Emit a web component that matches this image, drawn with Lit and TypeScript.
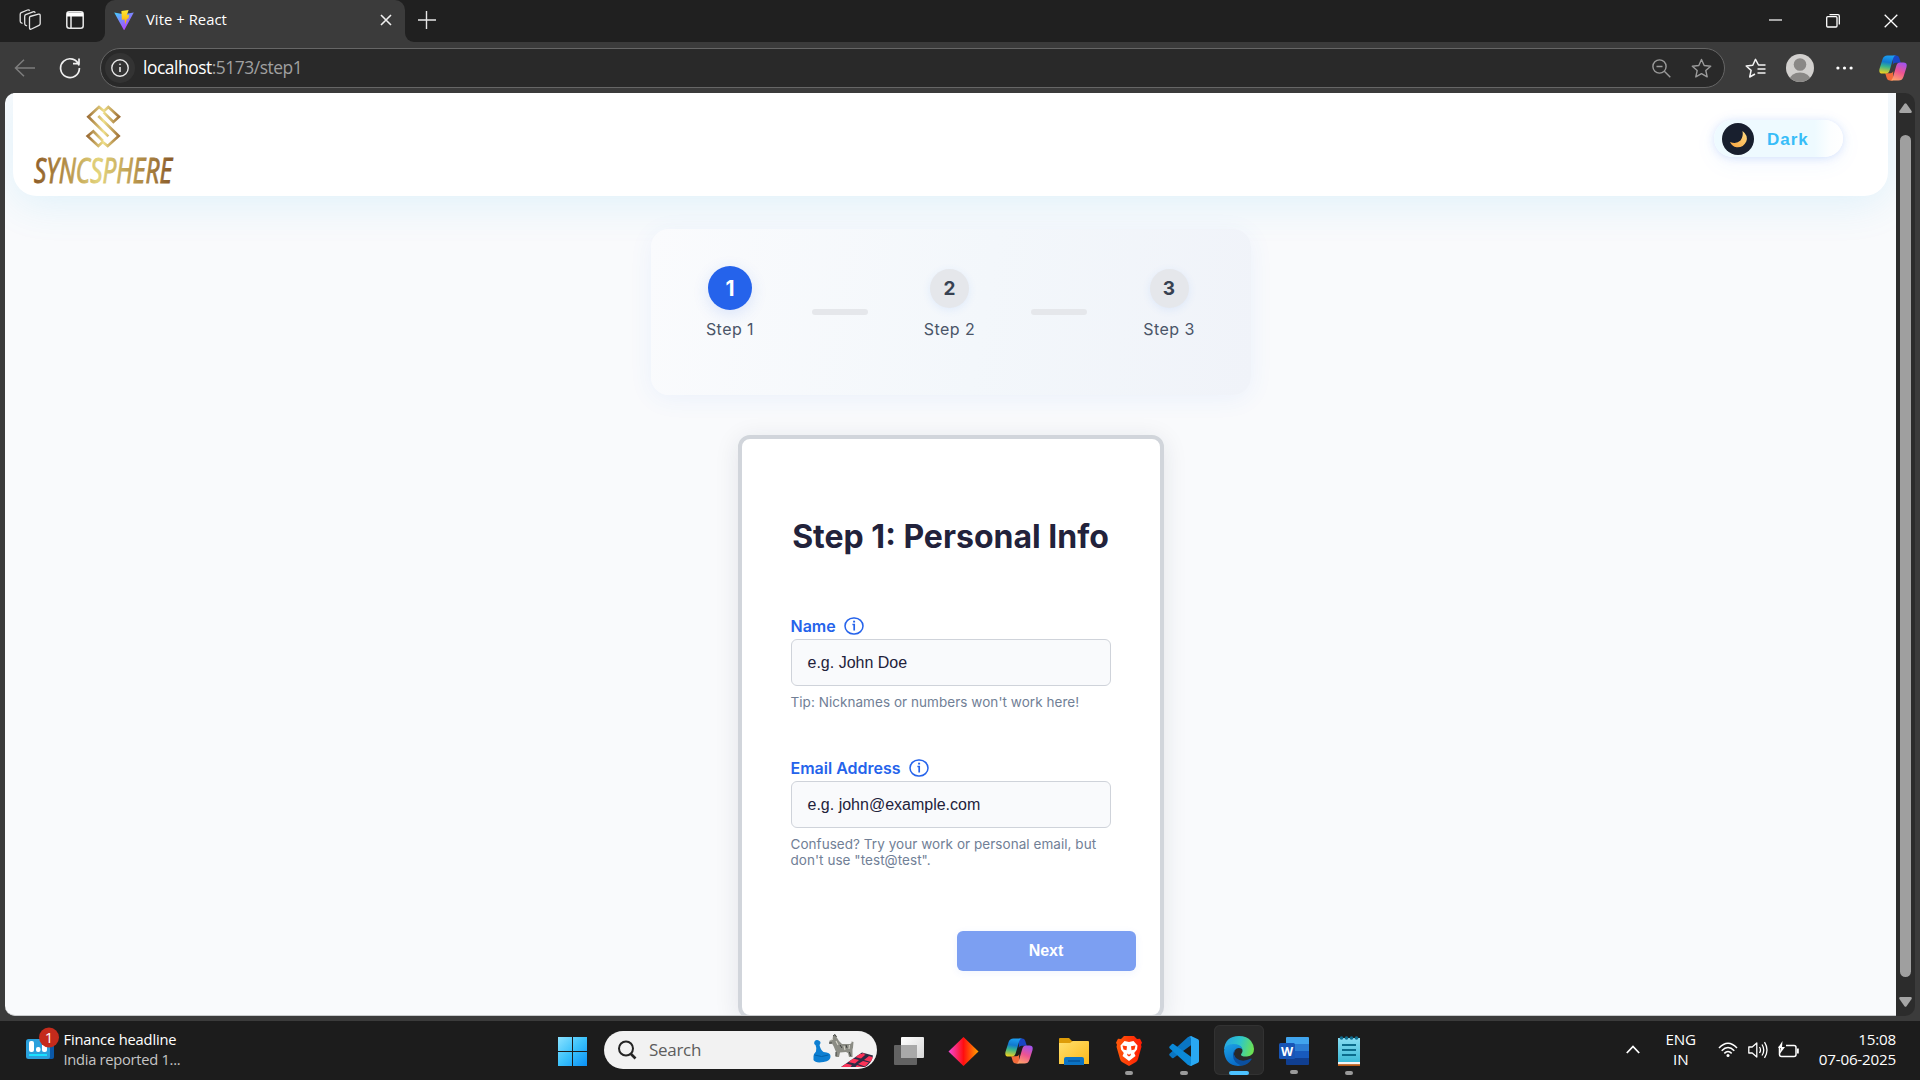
import { LitElement, html, css, svg } from "lit";
import { customElement, property } from "lit/decorators.js";

const copilot = (id: string) => svg`
  <svg width="28" height="26" viewBox="0 0 28 26">
    <defs>
      <linearGradient id="${id}a" x1="0.4" y1="0" x2="0.25" y2="1"><stop offset="0" stop-color="#1b9df0"/><stop offset=".35" stop-color="#1279cf"/><stop offset=".6" stop-color="#37b48d"/><stop offset="1" stop-color="#f5d21b"/></linearGradient>
      <linearGradient id="${id}b" x1="0.7" y1="0" x2="0.3" y2="1"><stop offset="0" stop-color="#a353ec"/><stop offset=".5" stop-color="#ee5490"/><stop offset="1" stop-color="#ffa26b"/></linearGradient>
    </defs>
    <path fill="#1a46c4" d="M14 .5h3.2q2.3 0 3 2.2l1.6 5h-5q-2.3 0-3 2z"/>
    <path fill="#f26b3a" d="M14 25.500h-3.200q-2.300 0-3-2.200l-1.600-5h5q2.300 0 3-2z"/>
    <path fill="url(#${id}a)" d="M8.500.500h8.500q-2 .3-2.700 2.600l-3.700 12.500q-.9 2.900-3.600 2.900H3.500Q-.7 18.500.6 13.600L3.600 4Q4.700.5 8.500.5z"/>
    <path fill="url(#${id}b)" d="M19.500 25.500H11q2-.3 2.700-2.600l3.700-12.500q.9-2.900 3.600-2.900h3.500q4.200 0 2.900 4.900L24.400 22q-1.100 3.500-4.900 3.500z"/>
  </svg>`;

const star = "M10.500 1.500l2.700 6 6.500.7-4.900 4.300 1.400 6.400-5.700-3.300-5.700 3.300 1.400-6.400-4.900-4.300 6.500-.7z";

@customElement("edge-chrome")
class EdgeChrome extends LitElement {
  static styles = css`
    :host { display: block; font-family: "Open Sans", "Noto Sans", sans-serif; color: #fff; }
    svg { display: block; flex: none; }
    .strip { height: 42px; background: #202020; display: flex; align-items: stretch; }
    .left { width: 105px; display: flex; align-items: center; gap: 24px; padding: 0 0 2px 19px; box-sizing: border-box; border-bottom-right-radius: 9px; background: #202020; }
    .under { background: #3b3b3b; display: flex; }
    .grow { flex: 1; }
    .tab { width: 300px; box-sizing: border-box; background: #3b3b3b; border-radius: 10px 10px 0 0; display: flex; align-items: center; padding: 0 13px 2px 9px; }
    .corner { background: #202020; display: flex; }
    .title { font-size: 14.8px; letter-spacing: 0.05px; margin: 0 0 2px 12px; flex: 1; white-space: nowrap; }
    .rest { flex: 1; background: #202020; border-bottom-left-radius: 9px; display: flex; align-items: center; padding: 0 22px 2px 12px; }
    .win { margin: 2px 0 0 auto; display: flex; gap: 44px; align-items: center; }
    .bar { height: 51px; box-sizing: border-box; background: #3b3b3b; display: flex; align-items: center; padding: 6px 13px 5px 14px; }
    .back { margin-right: 24px; }
    .addr { margin-left: 19px; width: 1625px; height: 40px; box-sizing: border-box; border: 1.5px solid #666; border-radius: 20px; background: #292929; display: flex; align-items: center; padding: 0 12px 0 4px; }
    .info { width: 30px; height: 30px; border-radius: 50%; background: #333; display: flex; align-items: center; justify-content: center; }
    .url { margin: 0 0 2px 8px; font-size: 17.4px; letter-spacing: -0.46px; flex: 1; color: #a0a0a0; white-space: nowrap; }
    .url b { font-weight: 400; color: #fff; }
    .tools { display: flex; align-items: center; gap: 20px; }
    .right { display: flex; align-items: center; margin-left: 20px; }
    .avatar { margin: 0 22px 0 20px; }
    .dots { margin-right: 26px; }
  `;
  render() {
    return html`
      <div class="strip">
        <div class="under"><div class="left">
          <svg width="23" height="22" viewBox="0 0 23 22" fill="none" stroke="#e2e2e2" stroke-width="1.300" stroke-linejoin="round"><path d="M11 7.500l8.500-2.300q1.700-.3 1.700 1.300v8q0 1.200-1.200 1.800l-7.500 3.700q-2 .8-2-1.200V9q0-1.200.5-1.500z"/><path d="M8 17l-1.300-.7q-1-.4-1-1.700V7.400q0-1.300 1-1.700L14 2.800q1.500-.5 2.300 1"/><path d="M3.500 14.500l-1.300-.7q-1-.4-1-1.700V5.400q0-1.300 1-1.700L8.500 1q1.500-.5 2.300.600"/></svg>
          <svg width="18" height="18" viewBox="0 0 18 18" fill="none" stroke="#e8e8e8" stroke-width="1.500"><rect x=".8" y=".8" width="16.400" height="16.400" rx="2.500"/><path d="M5 5v12"/><path d="M1 1.500h16v4H1z" fill="#fff" stroke="none"/></svg>
        </div></div>
        <div class="corner"><div class="tab">
          <svg width="20" height="20" viewBox="0 0 20 20"><defs><linearGradient id="v1" x1="0" y1="0" x2=".7" y2="1"><stop stop-color="#41d1ff"/><stop offset="1" stop-color="#bd34fe"/></linearGradient><linearGradient id="v2" x1="0" y1="0" x2="0" y2="1"><stop stop-color="#ffea35"/><stop offset="1" stop-color="#ffa800"/></linearGradient></defs><path fill="url(#v1)" d="M.2 2.500l9.500 1.700 10.100-1.700L10.500 19.800q-.4.500-.8 0z"/><path fill="url(#v2)" d="M7.400 1l7.200-1-1.800 5.200 2.200-.4-.4 3.500-1.700.6-1.800 5.500-.5-5-2.700.4z"/></svg>
          <span class="title">Vite + React</span>
          <svg width="12" height="12" viewBox="0 0 12 12" stroke="#f0f0f0" stroke-width="1.600"><path d="M1 1l10 10M11 1L1 11"/></svg>
        </div></div>
        <div class="under grow"><div class="rest">
          <svg width="19" height="18" viewBox="0 0 19 18" stroke="#e6e6e6" stroke-width="1.400"><path d="M9.500 0v18M1 9h18"/></svg>
          <div class="win">
            <svg width="13" height="14" viewBox="0 0 13 14" stroke="#fff" stroke-width="1.200"><path d="M0 6h13"/></svg>
            <svg width="14" height="14" viewBox="0 0 14 14" fill="none" stroke="#fff" stroke-width="1.300"><rect x=".7" y="2.700" width="10.300" height="10.300" rx="1"/><path d="M3.500.7H12q1.300 0 1.300 1.300v8.500"/></svg>
            <svg width="14" height="14" viewBox="0 0 14 14" stroke="#fff" stroke-width="1.300"><path d="M.7.700l12.600 12.600M13.300.700L.7 13.300"/></svg>
          </div>
        </div></div>
      </div>
      <div class="bar">
        <svg class="back" width="21" height="18" viewBox="0 0 21 18" fill="none" stroke="#7d7d7d" stroke-width="1.500"><path d="M21 9H2M10 .8L1.500 9l8.500 8.200"/></svg>
        <svg width="22" height="22" viewBox="0 0 22 22" fill="none" stroke="#f0f0f0" stroke-width="1.700"><path d="M20 8.500A9.400 9.400 0 1 0 20.400 11M20 1.500v5.200h-6"/></svg>
        <div class="addr">
          <div class="info"><svg width="18" height="18" viewBox="0 0 18 18" fill="none" stroke="#e8e8e8" stroke-width="1.400"><circle cx="9" cy="9" r="8.200"/><path d="M9 8v5" stroke-width="1.600"/><circle cx="9" cy="5.300" r=".6" fill="#e8e8e8" stroke-width=".6"/></svg></div>
          <span class="url"><b>localhost</b>:5173/step1</span>
          <div class="tools">
            <svg width="19" height="19" viewBox="0 0 19 19" fill="none" stroke="#9a9a9a" stroke-width="1.400"><circle cx="7.500" cy="7.500" r="6.600"/><path d="M4.500 7.500h6M12.300 12.300l6 6"/></svg>
            <svg width="21" height="21" viewBox="0 0 21 21" fill="none" stroke="#9a9a9a" stroke-width="1.400" stroke-linejoin="round"><path d="${star}"/></svg>
          </div>
        </div>
        <div class="right">
          <svg width="21" height="21" viewBox="0 0 21 21" fill="none" stroke="#f4f4f4" stroke-width="1.500" stroke-linejoin="round"><path d="M20.500 7h-7L10.500 1.300 7.800 7.300 1.200 8l4.900 4.400-1.400 6.600 5.300-3M12.500 11h8M12.500 15h8"/></svg>
          <svg class="avatar" width="28" height="28" viewBox="0 0 28 28"><defs><clipPath id="av"><circle cx="14" cy="14" r="14"/></clipPath></defs><g clip-path="url(#av)"><rect width="28" height="28" fill="#d2d0ce"/><circle cx="14" cy="10.500" r="6.300" fill="#8a8886"/><ellipse cx="14" cy="26" rx="10.500" ry="7.500" fill="#8a8886"/></g></svg>
          <svg class="dots" width="17" height="4" viewBox="0 0 17 4" fill="#fff"><circle cx="1.900" cy="2" r="1.600"/><circle cx="8.500" cy="2" r="1.600"/><circle cx="15.100" cy="2" r="1.600"/></svg>
          ${copilot("c")}
        </div>
      </div>`;
  }
}

@customElement("form-field")
class FormField extends LitElement {
  @property() label = "";
  @property() sample = "";
  @property() hint = "";
  static styles = css`
    :host { display: block; font-family: Inter, sans-serif; }
    .label { display: flex; align-items: center; height: 26px; font-size: 16px; font-weight: 600; color: #2563eb; letter-spacing: 0; gap: 9px; }
    .label svg { display: block; margin: 0 0 1px -.5px; }
    .box { height: 47px; box-sizing: border-box; border: 1px solid #cfd3da; border-radius: 6px; background: #f9fafc; color: #22223b; font: 16px "Liberation Sans", sans-serif; display: flex; align-items: center; padding: 0 16px; }
    .hint { margin-top: 8px; font-size: 13.500px; line-height: 16px; color: #718096; letter-spacing: 0.050px; white-space: pre-line; }
  `;
  render() {
    return html`
      <div class="label"><span>${this.label}</span>
        <svg width="20" height="18" viewBox="0 0 20 18" fill="none" stroke="#2563eb" stroke-width="1.500"><rect x="1" y="1" width="18" height="16" rx="8.500" ry="8"/><path d="M8.400 7.500h1.800V13.500" stroke-width="1.700"/><path d="M9.100 4.600h2" stroke-width="1.800"/></svg>
      </div>
      <div class="box">${this.sample}</div>
      <div class="hint">${this.hint}</div>`;
  }
}

@customElement("page-view")
class PageView extends LitElement {
  static styles = css`
    :host { display: block; font-family: Inter, sans-serif; }
    .view { height: 923px; box-sizing: border-box; background: #f9fafc; border-radius: 10px 0 0 10px; overflow: hidden; border-bottom: 1px solid #c9cbcd; display: flex; flex-direction: column; align-items: center; }
    .head { flex: none; align-self: stretch; margin: 0 8px; height: 103px; box-sizing: border-box; background: #fff; border-radius: 0 0 24px 24px; box-shadow: 0 8px 40px rgba(56, 185, 240, .13); display: flex; justify-content: space-between; align-items: flex-start; padding: 8px 45px 0 18px; }
    .head svg { display: block; overflow: visible; }
    .brand { font: italic 500 35px "Open Sans", sans-serif; }
    .toggle { margin-top: 19px; width: 129px; height: 37px; box-sizing: border-box; border-radius: 19px; background: linear-gradient(90deg, #eefaff 0 78%, #fcfeff 90%, #fff); box-shadow: 0 1px 9px rgba(37, 99, 235, .17), 0 6px 24px rgba(56, 130, 248, .06); display: flex; align-items: center; padding-left: 8px; }
    .moon { width: 32px; height: 32px; border-radius: 50%; background: #181f2e; display: flex; align-items: center; justify-content: center; }
    .mode { margin: 2px 0 0 13px; font: bold 17px "Liberation Sans", sans-serif; letter-spacing: 1px; color: #38bdf8; }
    .steps { flex: none; margin-top: 33px; width: 600px; height: 166px; box-sizing: border-box; border-radius: 18px; background: linear-gradient(100deg, #fafbfd, #f3f7fb 55%, #f0f3f9); box-shadow: 0 4px 24px rgba(59, 130, 246, .07); display: flex; padding: 34px 56px 0 54px; align-items: flex-start; justify-content: space-between; }
    .step { width: 51px; display: flex; flex-direction: column; align-items: center; font-size: 16px; line-height: 20px; letter-spacing: .45px; color: #4a5568; white-space: nowrap; }
    .ring { height: 50px; display: flex; align-items: center; margin-bottom: 6px; }
    .num { width: 39px; height: 39px; box-sizing: border-box; padding-top: 1px; border-radius: 50%; background: #e5e7eb; color: #374151; font-weight: 700; font-size: 19px; letter-spacing: 0; display: flex; align-items: center; justify-content: center; box-shadow: 0 2px 8px rgba(59, 130, 246, .1); }
    .active { width: 44px; height: 44px; background: #2563eb; color: #fff; font-size: 21px; box-shadow: 0 4px 16px rgba(37, 99, 235, .15); }
    .link { margin-top: 46px; width: 56px; height: 6px; border-radius: 3px; background: #e5e7eb; }
    .card { flex: none; margin-top: 40px; width: 426px; height: 584px; box-sizing: border-box; border: 4px solid #d1d5db; border-radius: 12px; background: #fff; box-shadow: 0 4px 24px rgba(30, 41, 59, .1); display: flex; flex-direction: column; padding: 76px 24px 0 49px; }
    h1 { margin: 0 0 54px; width: 320px; font-size: 32px; line-height: 44px; font-weight: 700; color: #22223b; letter-spacing: 0; text-align: center; white-space: nowrap; }
    .field { width: 320px; height: 142px; }
    .next { align-self: flex-end; margin-top: 34px; width: 179px; height: 40px; border-radius: 6px; background: #7c9ff2; color: #fff; font: bold 16px "Liberation Sans", sans-serif; display: flex; align-items: center; justify-content: center; box-shadow: 0 2px 8px rgba(37, 99, 235, .07); }
  `;
  render() {
    return html`
      <main class="view">
        <header class="head">
          <svg width="150" height="94" viewBox="0 0 150 94">
            <defs>
              <linearGradient id="g" gradientUnits="userSpaceOnUse" x1="2" y1="0" x2="144" y2="0"><stop stop-color="#8d5c27"/><stop offset=".22" stop-color="#b18b44"/><stop offset=".46" stop-color="#e3d47c"/><stop offset=".7" stop-color="#bd9b50"/><stop offset="1" stop-color="#875727"/></linearGradient>
              <linearGradient id="m" gradientUnits="userSpaceOnUse" x1="262" y1="0" x2="360" y2="0"><stop stop-color="#9b6c35"/><stop offset=".5" stop-color="#efdf88"/><stop offset="1" stop-color="#9b6b33"/></linearGradient>
            </defs>
            <g transform="translate(-31 -101) scale(.33333)" fill="none" stroke="url(#m)" stroke-width="8">
              <path d="M311 337L340 366 357 350 325 321 312 333 297 321 265 350 325 409"/>
              <path d="M309 423L280 394 263 408 295 438 308 426 323 438 356 408 295 348"/>
            </g>
            <text class="brand" x="3" y="82" textLength="138" lengthAdjust="spacingAndGlyphs" fill="url(#g)" stroke="url(#g)" stroke-width="1">SYNCSPHERE</text>
          </svg>
          <div class="toggle">
            <span class="moon"><svg width="20" height="20" viewBox="0 0 20 20"><defs><linearGradient id="mo" x1="1" y1="0" x2="0" y2="1"><stop stop-color="#ffdc83"/><stop offset="1" stop-color="#f7a23d"/></linearGradient></defs><path fill="url(#mo)" d="M14.500 2Q20.500 6.500 18.300 12.500 15 19 8.500 18.300 4 17.500 2 13q6.500 2.500 10.500-1.500Q15.500 7.500 14.500 2z"/></svg></span>
            <span class="mode">Dark</span>
          </div>
        </header>
        <section class="steps">
          <div class="step"><span class="ring"><span class="num active">1</span></span>Step 1</div>
          <span class="link"></span>
          <div class="step"><span class="ring"><span class="num">2</span></span>Step 2</div>
          <span class="link"></span>
          <div class="step"><span class="ring"><span class="num">3</span></span>Step 3</div>
        </section>
        <section class="card">
          <h1>Step 1: Personal Info</h1>
          <form-field class="field" label="Name" sample="e.g. John Doe" hint="Tip: Nicknames or numbers won't work here!"></form-field>
          <form-field class="field" label="Email Address" sample="e.g. john@example.com" .hint=${'Confused? Try your work or personal email, but\ndon\'t use "test@test".'}></form-field>
          <div class="next">Next</div>
        </section>
      </main>`;
  }
}

@customElement("task-bar")
class TaskBar extends LitElement {
  static styles = css`
    :host { display: block; font-family: "Open Sans", "Noto Sans", sans-serif; color: #fff; }
    svg { display: block; flex: none; }
    .bar { height: 59px; box-sizing: border-box; background: #1c1c1c; display: flex; align-items: center; padding-bottom: 2px; }
    .news { width: 544.5px; box-sizing: border-box; padding-left: 25px; display: flex; gap: 4.500px; height: 57px; }
    .news svg { margin-top: 5px; }
    .copy { font-size: 14.700px; line-height: 20px; letter-spacing: -.17px; padding-top: 8px; white-space: nowrap; }
    .copy div + div { color: #c5c5c5; letter-spacing: -.28px; }
    .cell { width: 55px; height: 50px; display: flex; align-items: center; justify-content: center; flex-direction: column; box-sizing: border-box; padding-top: 12px; }
    .pill { flex: none; width: 8px; height: 4px; border-radius: 2px; background: #9a9a9a; margin-top: 5px; }
    .none { background: transparent; }
    .tile { width: 50px; margin: 0 2.500px; background: #292929; border-radius: 6px; box-shadow: inset 0 0 0 1px #323232; }
    .on { width: 20px; background: #4cc2ff; }
    .search { margin: 0 4.500px 0 4px; width: 273px; height: 38px; border-radius: 19px; background: #f2f2f2; display: flex; align-items: center; color: #5d5d5d; font-size: 17px; letter-spacing: -.3px; overflow: hidden; padding-left: 13px; box-sizing: border-box; }
    .search span { flex: 1; padding-left: 12.500px; }
    .tray { margin-left: auto; display: flex; align-items: center; padding-right: 24px; font-size: 15.200px; line-height: 20px; letter-spacing: -.2px; }
    .lang { margin: 0 22px 2px 26px; text-align: center; width: 30px; display: flex; flex-direction: column; align-items: center; }
    .sys { display: flex; gap: 10px; align-items: center; }
    .time { text-align: right; margin: 0 0 2px 20px; }
  `;
  cell(icon: unknown, pill = "none", tile = "") {
    return html`<div class="cell ${tile}">${icon}<span class="pill ${pill}"></span></div>`;
  }
  render() {
    return html`
      <div class="bar">
        <div class="news">
          <svg width="34" height="40" viewBox="0 0 34 40"><rect x="16" y="13" width="13" height="20" rx="2" fill="#0a58a8"/><rect x="1" y="13" width="24" height="20" rx="2.500" fill="#2ba0dc"/><g fill="#fff"><rect x="4" y="15" width="5" height="11" rx="2"/><rect x="11" y="21" width="4.500" height="5" rx="2"/><rect x="17" y="17" width="5" height="9" rx="2"/></g><rect x="4" y="28" width="18" height="2" fill="#19e1ff"/><circle cx="24" cy="11.500" r="10" fill="#c42b1c"/><text x="24" y="17" text-anchor="middle" font-size="15" fill="#fff">1</text></svg>
          <div class="copy"><div>Finance headline</div><div>India reported 1...</div></div>
        </div>
        ${this.cell(svg`<svg width="29" height="29" viewBox="0 0 29 29"><defs><linearGradient id="w" gradientUnits="userSpaceOnUse" x1="0" y1="0" x2="29" y2="29"><stop stop-color="#8be2ff"/><stop offset=".5" stop-color="#3ac1fb"/><stop offset="1" stop-color="#0a90f5"/></linearGradient></defs><path fill="url(#w)" d="M0 0h14v14H0zM15 0h14v14H15zM0 15h14v14H0zM15 15h14v14H15z"/></svg>`)}
        <div class="search">
          <svg width="20" height="20" viewBox="0 0 20 20" fill="none" stroke="#252525" stroke-width="2"><circle cx="9" cy="8.500" r="7"/><path d="M13.500 13.500l5 5" stroke-width="2.600"/></svg>
          <span>Search</span>
          <svg width="65" height="38" viewBox="0 0 65 38">
            <path fill="#0d7fd2" d="M3.500 14q-2-1-1-3.500Q4.500 8 7.500 10q2 1.500 0 4 1 5 4 7 7 .5 7 4 .5 5-7 6-8 1.500-10-2V25q0-2 2.500-4.500 1-3-.5-6.500z"/>
            <path fill="none" stroke="#0562aa" d="M2.500 24q7 3 14 0"/>
            <path fill="#8b8c84" d="M17 10l3.500-1.500L21 5l2-1.500L24.500 6l2.500 4 3 3h7.500q2.500-.5 2-2.500l2 .5-.5 5.500-.5 2v7.500h-3.500l-1-4-2-1-6 .5-1 4.500h-3.500l.5-5-2.500-6-1.500-2.500-2.500.500q-.5-1.500 0-2.500z"/>
            <path stroke="#3f403d" stroke-width="1" fill="none" d="M21 5l2-1.500L24.500 6M17 12h3M24 21v4M37.500 21l1 4M28 14l2 3M34 14l1 3"/>
            <path stroke="#d5d4c9" stroke-width="1.100" d="M24 10l2 4M32 15l1 4M37.500 14l-.5 4M21 8l-2 1"/>
            <clipPath id="board"><path d="M29 36L50 21.500l11 3Q60 32 53 36z"/></clipPath>
            <g clip-path="url(#board)"><path fill="#2c2b45" d="M25 20h38v18H25z"/><path fill="#fb3358" d="M43 26l5-3.500 5 1.500-4 3.500zM52 29l5-4 6 2-4 4zM36 31l5-3.500 6 1.500-4 3.500zM46 33l5-3 6 1.500-4 4zM29 36l5-3.500 6 1.500-2 3zM50 22l4 1-3 1zM42 38l3-4 6 2z"/></g>
          </svg>
        </div>
        ${this.cell(svg`<svg width="30" height="29" viewBox="0 0 30 29"><defs><linearGradient id="tv" x1="0" y1="0" x2="1" y2="1"><stop stop-color="#fff"/><stop offset="1" stop-color="#d7d7d7"/></linearGradient></defs><rect x="7" y="0" width="23" height="21" rx="1" fill="url(#tv)"/><rect x="0" y="8" width="23" height="20" rx="1" fill="#6e6e6e" opacity=".85"/><path fill="#a9a9a9" d="M7 8h16v13H7z"/></svg>`)}
        ${this.cell(svg`<svg width="31" height="29" viewBox="0 0 31 29"><defs><linearGradient id="d"><stop offset=".05" stop-color="#f542c8"/><stop offset=".5" stop-color="#ff0e10"/><stop offset=".65" stop-color="#ff3a08"/><stop offset="1" stop-color="#ffa300"/></linearGradient></defs><path fill="url(#d)" d="M.5 14.500L15.500 0l15 14.500L15.500 29z"/></svg>`)}
        ${this.cell(copilot("t"))}
        ${this.cell(svg`<svg width="30" height="28" viewBox="0 0 30 28"><defs><linearGradient id="f" x1="0" y1="0" x2="1" y2="1"><stop stop-color="#ffe06e"/><stop offset="1" stop-color="#fbb91a"/></linearGradient></defs><path fill="#dd9c08" d="M0 2q0-1 1-1h9l3 3h5v8H0z"/><path fill="url(#f)" d="M0 6h11l3-2h15q1 0 1 1v22H0z"/><path fill="#0b73c4" d="M5 28v-6q0-2 2-2h16q2 0 2 2v6z"/><path stroke="#054e93" stroke-width="1.200" d="M9 24h12"/></svg>`)}
        ${this.cell(svg`<svg width="26" height="30" viewBox="0 0 26 30"><defs><linearGradient id="b"><stop stop-color="#ff5a0a"/><stop offset="1" stop-color="#ff1c05"/></linearGradient></defs><path fill="url(#b)" d="M8 0h10l3 3 3-.3 2 4-1 2 .5 2L22 23q-.5 2-2 3l-7 4-7-4q-1.500-1-2-3L.5 10.700l.5-2-1-2 2-4L5 3z"/><path fill="#fff" d="M8.500 5l4.500 1 4.500-1 4 4.500-.5 4-2.800 3.500 1.300 3L13 25l-6.500-5 1.300-3L5 13.500l-.5-4z"/><path fill="#ff3a08" d="M6.500 9.500l4.500.8-.5 4-3-.8zM19.500 9.500l-4.500.8.5 4 3-.8zM11 17.500l2 1.300 2-1.300-.5 2L13 20.500l-1.500-1z"/></svg>`, "dot")}
        ${this.cell(svg`<svg width="30" height="30" viewBox="0 0 30 30"><path fill="#0a75c2" d="M.8 19.800q-1.200-1 0-2.200L19 1l4-1v8.500L4.500 22q-1 .7-2-.5z"/><path fill="#0b89d8" d="M.8 10.200q-1.200 1 0 2.200L19 29l4 1v-8.500L4.500 8q-1-.7-2 .5z"/><path fill="#29a8f3" d="M22.500.2L29 3.300q1 .6 1 1.700v20q0 1.100-1 1.700l-6.500 3.100Q21 30 20 29q2 .5 2-1.500v-25Q22 .5 20 1q1-1 2.500-.8z"/></svg>`, "dot")}
        ${this.cell(svg`<svg width="30" height="30" viewBox="0 0 30 30"><defs><linearGradient id="e1" x1="0" y1=".4" x2="1" y2=".6"><stop stop-color="#27a5e3"/><stop offset=".5" stop-color="#2ec7c9"/><stop offset="1" stop-color="#6fe34d"/></linearGradient><linearGradient id="e2" x1="0" y1="0" x2=".4" y2="1"><stop stop-color="#1da2e5"/><stop offset="1" stop-color="#086cc8"/></linearGradient></defs><path fill="url(#e1)" d="M0 14Q1 0 15 0q8 0 12 5 3 4 3 8 0 7-7 7.500-6 .3-6-2 2-2 1.500-4.500Q17 9 11 9 3 9 0 14z"/><path fill="url(#e2)" d="M0 15Q1 8 9.500 8q7 0 9 5-5-2.500-7.500 1-3 5 2 10 4 4 8 4-4 2-7 2Q1 29 0 15z"/><path fill="#0b4f9e" d="M12 13q-4 5 0 9 6 5 15 .500 1 0 .5 1Q24 29 18 29.700 9 27 9 19q0-4 3-6z"/></svg>`, "on", "tile")}
        ${this.cell(svg`<svg width="30" height="28" viewBox="0 0 30 28"><path fill="#41a5ee" d="M8 0h21q1 0 1 1v6H7V1q0-1 1-1z"/><path fill="#2b7cd3" d="M7 7h23v7H7z"/><path fill="#185abd" d="M7 14h23v7H7z"/><path fill="#103f91" d="M7 21h23v6q0 1-1 1H8q-1 0-1-1z"/><rect x="0" y="6" width="16" height="16" rx="1.500" fill="#1855b5"/><text x="8" y="18.500" text-anchor="middle" font-family="Open Sans" font-weight="700" font-size="12.500" fill="#fff">W</text></svg>`, "dot")}
        ${this.cell(svg`<svg width="22" height="30" viewBox="0 0 22 30"><defs><linearGradient id="n" x1="0" y1="0" x2="0" y2="1"><stop stop-color="#86dcf2"/><stop offset="1" stop-color="#3cb9d6"/></linearGradient></defs><path fill="#b95b16" d="M0 26h22v4H0z"/><path fill="#f4f4f4" d="M0 25h22v3.200H0z"/><path fill="url(#n)" d="M0 2h22v24H0z"/><g stroke="#0b6c8c" stroke-width="1.800"><path d="M4 9h14M4 14h14M4 19h14"/></g><g fill="#106b8c"><circle cx="3.500" cy="2" r="1.800"/><circle cx="8.500" cy="2" r="1.800"/><circle cx="13.500" cy="2" r="1.800"/><circle cx="18.500" cy="2" r="1.800"/></g></svg>`, "dot")}
        <div class="tray">
          <svg width="14" height="9" viewBox="0 0 14 9" fill="none" stroke="#fff" stroke-width="1.800"><path d="M.8 8L7 1.500 13.200 8"/></svg>
          <div class="lang"><span>ENG</span><span>IN</span></div>
          <div class="sys">
            <svg width="20" height="16" viewBox="0 0 20 16" fill="none" stroke="#fff" stroke-width="1.500"><path d="M1 6q9-9.500 18 0M3.700 8.700q6.300-6.500 12.600 0M6.300 11.400q3.700-3.700 7.400 0"/><circle cx="10" cy="13.600" r="1.500" fill="#fff" stroke="none"/></svg>
            <svg width="20" height="18" viewBox="0 0 20 18" fill="none" stroke="#fff" stroke-width="1.300" stroke-linejoin="round"><path d="M.8 6h3.400l4.600-4v14L4.200 12H.8zM11.500 6q2 3 0 6M14 3.500q3.500 5.500 0 11M16.500 1.200q5 7.800 0 15.600"/></svg>
            <svg width="21" height="18" viewBox="0 0 21 18" fill="none" stroke="#fff" stroke-width="1.500"><path d="M8 4.500h8q2 0 2 2v7q0 2-2 2H3.500q-2 0-2-2V5"/><path fill="#fff" stroke="none" d="M19 7.500h1.800v5H19zM4.500 0L0 7h3l-2 7 6-8H4z"/></svg>
          </div>
          <div class="time">15:08<br>07-06-2025</div>
        </div>
      </div>`;
  }
}

@customElement("app-root")
class AppRoot extends LitElement {
  static styles = css`
    :host { display: block; width: 1920px; height: 1080px; overflow: hidden; background: #3b3b3b; }
    .body { display: flex; padding: 0 5px; height: 928px; box-sizing: border-box; }
    .page { width: 1891px; }
    .scroll { width: 19px; height: 923px; background: #2c2c2c; border-radius: 0 10px 10px 0; display: flex; flex-direction: column; align-items: center; box-sizing: border-box; padding: 10px 0 9px; }
    .thumb { width: 11px; height: 842px; border-radius: 6px; background: #9f9f9f; margin: 22px 0 auto; }
    svg { display: block; }
  `;
  render() {
    return html`
      <edge-chrome></edge-chrome>
      <div class="body">
        <page-view class="page"></page-view>
        <div class="scroll">
          <svg width="13" height="10" viewBox="0 0 13 10" fill="#a5a5a5"><path d="M5.500.800q1-1.200 2 0L12.600 8q.6 2-1 2H1.400q-1.600 0-1-2z"/></svg>
          <div class="thumb"></div>
          <svg width="13" height="10" viewBox="0 0 13 10" fill="#a5a5a5"><path d="M5.500 9.200q1 1.200 2 0L12.600 2q.6-2-1-2H1.400q-1.600 0-1 2z"/></svg>
        </div>
      </div>
      <task-bar></task-bar>`;
  }
}
